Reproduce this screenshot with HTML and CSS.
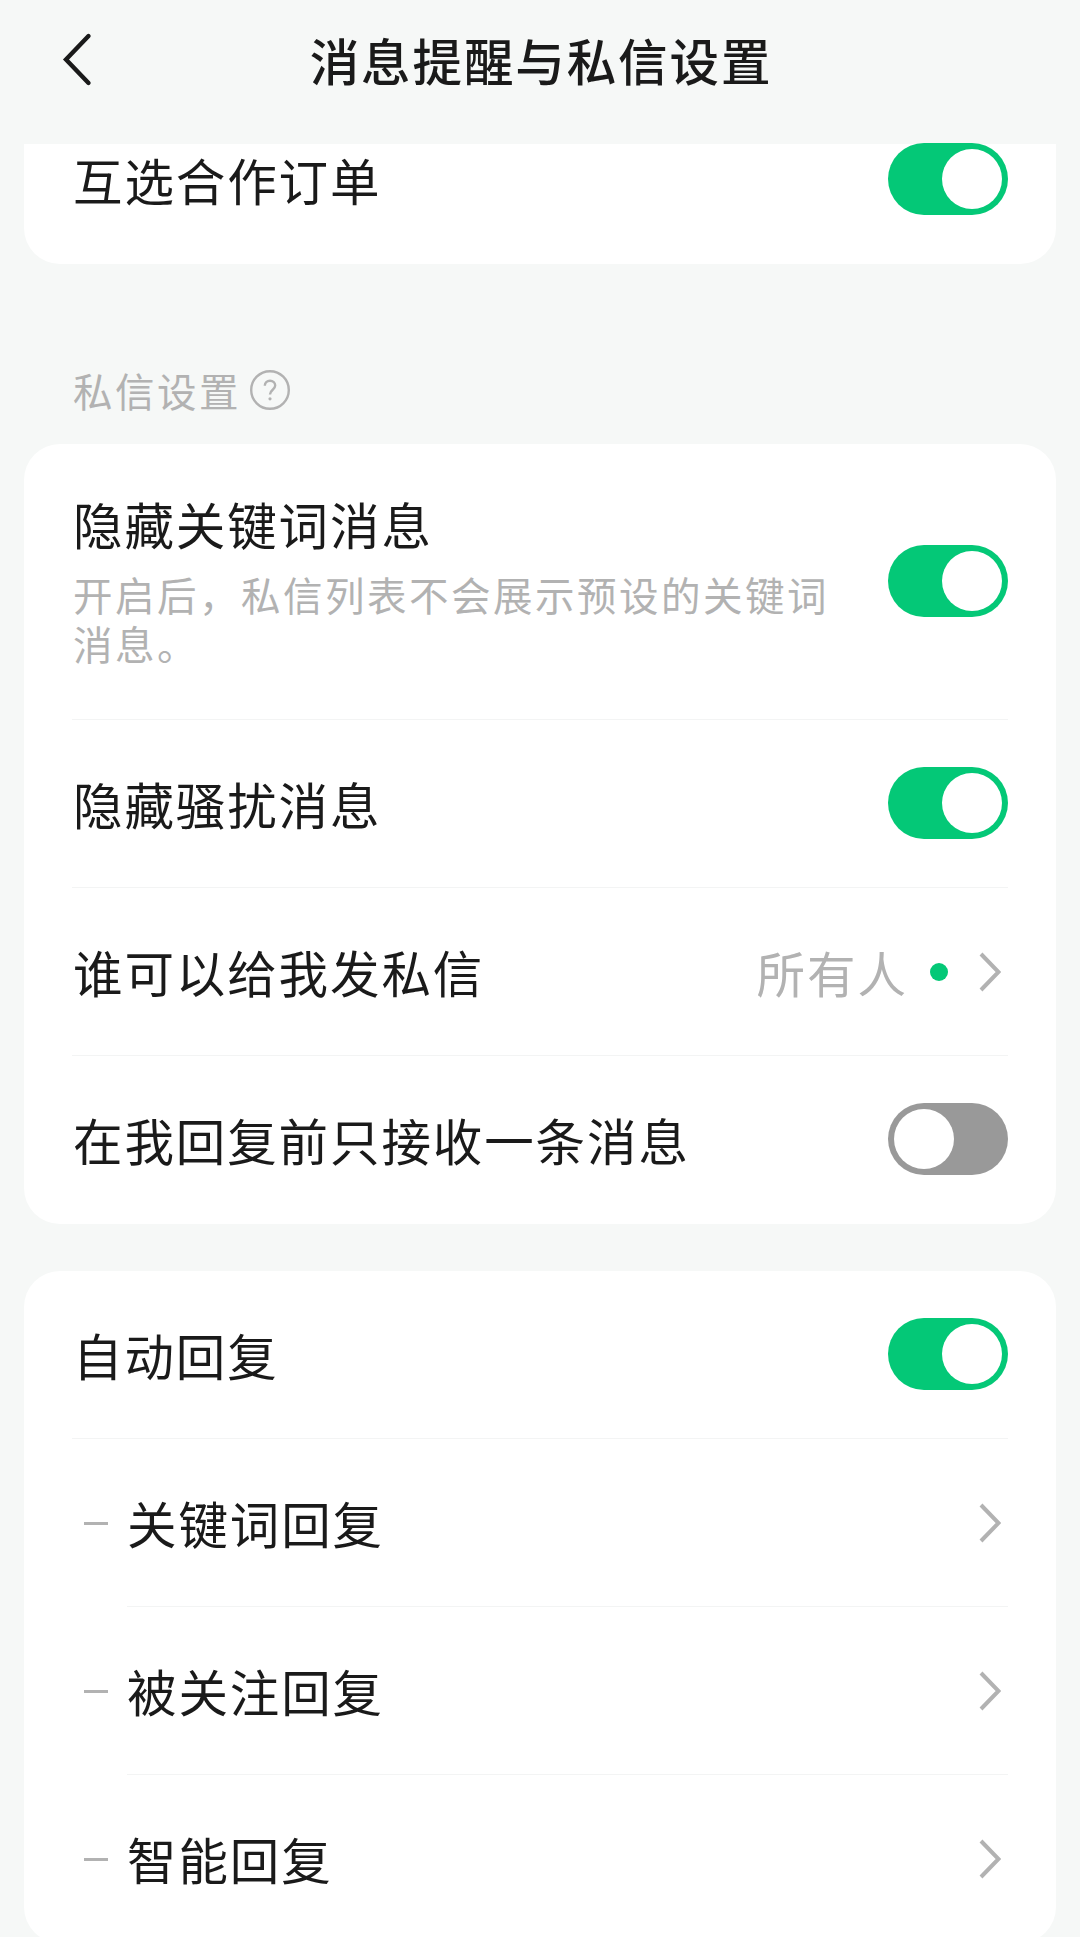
FILE: index.html
```html
<!DOCTYPE html>
<html lang="zh-CN">
<head>
<meta charset="utf-8">
<title>消息提醒与私信设置</title>
<link rel="stylesheet" href="styles.css">
</head>
<body>
<header class="navbar">
  <svg class="back" viewBox="0 0 32 56" fill="none"><path d="M27.5 5 5 28.500l22.500 23.500"/></svg>
  <h1 class="title">消息提醒与私信设置</h1>
</header>
<main class="content">
  <section class="card card-clipped">
    <div class="row"><span class="label">互选合作订单</span><span class="switch on"></span></div>
  </section>

  <div class="section-head">
    <span class="section-title">私信设置</span>
    <svg class="help" viewBox="0 0 40 40" fill="none"><circle cx="20" cy="20" r="18.800"/><path d="M14.800 15.800c0-3 2.200-5 5.200-5s5.200 2 5.200 4.800c0 4.200-5.200 4.200-5.200 8.900"/><circle class="help-dot" cx="20" cy="28.800" r="1.600"/></svg>
  </div>

  <section class="card">
    <div class="row row-tall">
      <div class="texts">
        <span class="label">隐藏关键词消息</span>
        <p class="desc">开启后，私信列表不会展示预设的关键词消息。</p>
      </div>
      <span class="switch on"></span>
    </div>
    <div class="row"><span class="label">隐藏骚扰消息</span><span class="switch on"></span></div>
    <div class="row">
      <span class="label">谁可以给我发私信</span>
      <span class="value">所有人</span><span class="dot"></span>
      <svg class="chevron" viewBox="0 0 22 40" fill="none"><path d="m2 2 17.500 18L2 38"/></svg>
    </div>
    <div class="row"><span class="label">在我回复前只接收一条消息</span><span class="switch"></span></div>
  </section>

  <section class="card card-last">
    <div class="row"><span class="label">自动回复</span><span class="switch on"></span></div>
    <div class="sub">
      <span class="dash"></span>
      <div class="row"><span class="label">关键词回复</span><svg class="chevron" viewBox="0 0 22 40" fill="none"><path d="m2 2 17.500 18L2 38"/></svg></div>
    </div>
    <div class="sub">
      <span class="dash"></span>
      <div class="row"><span class="label">被关注回复</span><svg class="chevron" viewBox="0 0 22 40" fill="none"><path d="m2 2 17.500 18L2 38"/></svg></div>
    </div>
    <div class="sub">
      <span class="dash"></span>
      <div class="row"><span class="label">智能回复</span><svg class="chevron" viewBox="0 0 22 40" fill="none"><path d="m2 2 17.500 18L2 38"/></svg></div>
    </div>
  </section>
</main>
</body>
</html>
```
FILE: styles.css
```css
* { box-sizing: border-box; }
html, body { height: 1937px; overflow: hidden; }
body {
  margin: 0;
  background: #f6f8f7;
  color: #1a1a1a;
  font-family: "Noto Sans CJK SC", sans-serif;
}
.navbar {
  display: grid;
  grid-template-columns: 120px 1fr 120px;
  height: 144px;
  padding-top: 24px;
}
.back { width: 32px; height: 56px; margin: 7px 0 0 61px; stroke: #1a1a1a; stroke-width: 4.4; stroke-linecap: round; }
.title {
  margin: 0;
  padding-left: 2px;
  text-align: center;
  font-size: 49.5px;
  font-weight: 500;
  letter-spacing: 1.9px;
  line-height: 72px;
}
.content { padding: 0 24px; }
.card { padding: 0 48px; border-radius: 36px; background: #fff; }
.card-clipped {
  display: flex;
  flex-direction: column;
  justify-content: flex-end;
  height: 120px;
  border-radius: 0 0 36px 36px;
}
.card-last { margin-top: 47px; }
.row {
  display: flex;
  align-items: center;
  flex: none;
  height: 168px;
  border-bottom: 1px solid #f3f4f4;
}
.row:last-child { border-color: transparent; }
.sub:not(:last-child) .row { border-color: #f3f4f4; }
.row-tall { height: 276px; }
.texts { width: 768px; }
.label {
  display: block;
  margin-right: auto;
  padding-left: 1px;
  font-size: 49.5px;
  letter-spacing: 1.9px;
  line-height: 72px;
  white-space: nowrap;
}
.sub .label { padding-left: 0; }
.texts .label { margin: -8px 0 9px; }
.desc {
  margin: 0;
  padding-left: 1px;
  color: #b2b2b2;
  font-size: 39.5px;
  letter-spacing: 2.5px;
  line-height: 49px;
}
.section-head { display: flex; align-items: center; gap: 8px; height: 180px; padding: 71px 0 0 49px; }
.section-title { color: #b2b2b2; font-size: 39.5px; letter-spacing: 2.5px; line-height: 60px; }
.help { width: 40px; height: 40px; margin-left: 1px; stroke: #b2b2b2; stroke-width: 2.400; }
.help-dot { fill: #b2b2b2; stroke: none; }
.switch {
  display: flex;
  flex: none;
  width: 120px;
  height: 72px;
  margin: -1px 0 0 auto;
  padding: 6px;
  border-radius: 36px;
  background: #999;
}
.switch::before { content: ""; width: 60px; height: 60px; border-radius: 50%; background: #fff; }
.switch.on { justify-content: flex-end; background: #04c877; }
.value { color: #b2b2b2; font-size: 48.5px; letter-spacing: 2px; line-height: 72px; }
.dot { width: 18px; height: 18px; margin: 0 31px 0 22px; border-radius: 50%; background: #04c877; }
.chevron { flex: none; width: 22px; height: 40px; margin-right: 7px; stroke: #b2b2b2; stroke-width: 4; }
.sub { display: grid; grid-template-columns: 43px 1fr; align-items: center; padding-left: 12px; }
.dash { width: 24px; height: 3px; background: #b2b2b2; }
```
